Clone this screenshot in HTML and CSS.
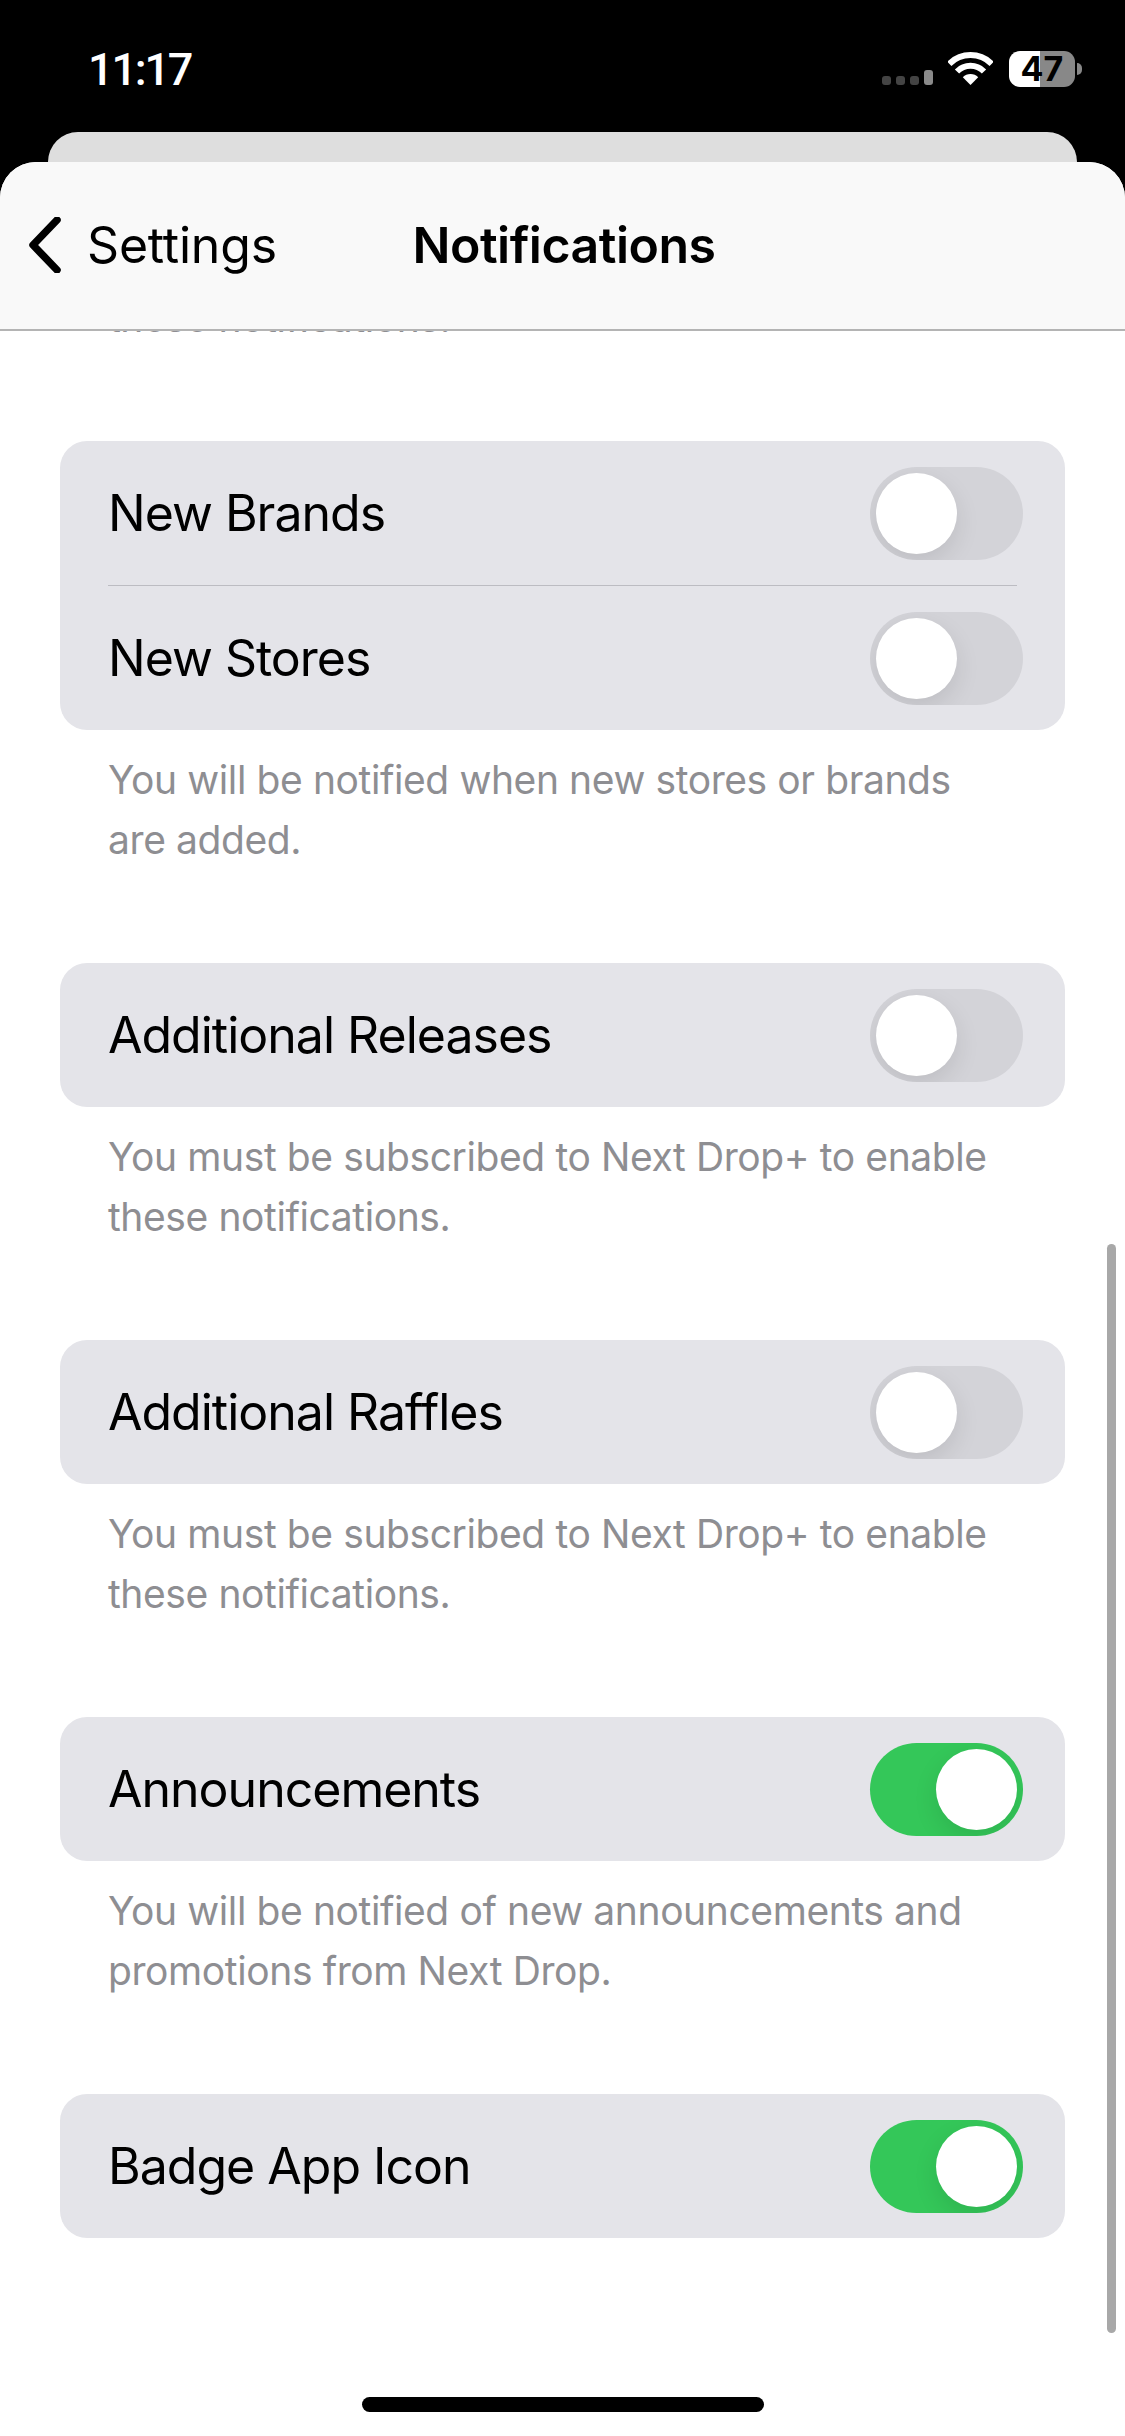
FILE: index.html
```html
<!DOCTYPE html>
<html lang="en">
<head>
<meta charset="utf-8">
<title>Notifications</title>
<link rel="stylesheet" href="styles.css">
</head>
<body>
<div class="phone">
  <header class="status">
    <span class="time">11:17</span>
    <div class="status-icons">
      <div class="cell"><i></i><i></i><i></i><i class="on"></i></div>
      <svg class="wifi" viewBox="0 0 45 33" aria-hidden="true">
        <path d="M1.3 11.8A30 30 0 0 1 43.7 11.8" fill="none" stroke="#fff" stroke-width="6"/>
        <path d="M9 19.5A19 19 0 0 1 36 19.5" fill="none" stroke="#fff" stroke-width="6"/>
        <path d="M22.5 33L14.8 25.2A11 11 0 0 1 30.2 25.2Z" fill="#fff"/>
      </svg>
      <div class="battery"><div class="battery-body">47</div><div class="battery-nub"></div></div>
    </div>
  </header>
  <div class="back-card"></div>
  <main class="sheet">
    <nav class="nav">
      <div class="back">
        <svg class="chevron" viewBox="0 0 34 56" aria-hidden="true"><path d="M29 3L5 28L29 53" fill="none" stroke="#000" stroke-width="7.5" stroke-linecap="round" stroke-linejoin="round"/></svg>
        <span>Settings</span>
      </div>
      <h1 class="title">Notifications</h1>
    </nav>
    <div class="content">
      <p class="note note-top">these notifications.</p>
      <section class="group">
        <div class="row"><span>New Brands</span><div class="toggle"><div class="knob"></div></div></div>
        <div class="divider"></div>
        <div class="row"><span>New Stores</span><div class="toggle"><div class="knob"></div></div></div>
      </section>
      <p class="note">You will be notified when new stores or brands are added.</p>
      <section class="group">
        <div class="row"><span>Additional Releases</span><div class="toggle"><div class="knob"></div></div></div>
      </section>
      <p class="note">You must be subscribed to Next Drop+ to enable these notifications.</p>
      <section class="group">
        <div class="row"><span>Additional Raffles</span><div class="toggle"><div class="knob"></div></div></div>
      </section>
      <p class="note">You must be subscribed to Next Drop+ to enable these notifications.</p>
      <section class="group">
        <div class="row"><span>Announcements</span><div class="toggle on"><div class="knob"></div></div></div>
      </section>
      <p class="note">You will be notified of new announcements and promotions from Next Drop.</p>
      <section class="group">
        <div class="row"><span>Badge App Icon</span><div class="toggle on"><div class="knob"></div></div></div>
      </section>
    </div>
    <div class="scrollbar"></div>
    <div class="home"></div>
  </main>
</div>
</body>
</html>
```
FILE: styles.css
```css
* { box-sizing: border-box; }
html, body { margin: 0; padding: 0; height: 2436px; overflow: hidden; background: #000; }
body { font-family: Inter, "Liberation Sans", sans-serif; color: #000; }
.phone { width: 1125px; height: 2436px; display: flex; flex-direction: column; background: #000; }

.status { height: 132px; flex: none; display: flex; align-items: flex-start; justify-content: space-between; padding: 0 43px 0 88px; color: #fff; }
.time { font-family: Roboto, sans-serif; font-size: 45px; font-weight: 500; line-height: 50px; margin-top: 45px; letter-spacing: -2.2px; }
.status-icons { display: flex; align-items: flex-start; margin-top: 51px; }
.cell { display: flex; align-items: flex-end; gap: 5px; height: 34px; width: 51px; margin-right: 15px; }
.cell i { display: block; width: 9px; height: 9px; border-radius: 3px; background: #444; }
.cell i.on { height: 15px; background: #8a8a8a; }
.wifi { width: 45px; height: 33px; margin-top: 1px; margin-right: 16px; }
.battery { display: flex; align-items: center; }
.battery-body { width: 66px; height: 36px; border-radius: 11px; background: linear-gradient(90deg, #fff 47%, #888 47%); color: #000; font-size: 34px; line-height: 36px; font-weight: 700; text-align: center; }
.battery-nub { width: 5px; height: 12px; margin-left: 2px; border-radius: 0 6px 6px 0; background: #888; }

.back-card { flex: none; height: 60px; margin: 0 48px -30px; background: #dedede; border-radius: 30px 30px 0 0; }

.sheet { flex: 1; position: relative; display: flex; flex-direction: column; background: #fff; border-radius: 36px 36px 0 0; overflow: hidden; }
.nav { position: relative; z-index: 1; flex: none; height: 169px; display: flex; align-items: center; justify-content: center; padding: 0 0 1px 3px; background: #f9f9f9; border-bottom: 2px solid #b4b4b4; }
.back { position: absolute; left: 28px; top: 55px; display: flex; align-items: center; gap: 25px; font-size: 50px; line-height: 56px; letter-spacing: -0.2px; }
.chevron { width: 34px; height: 56px; }
.title { margin: 0; font-size: 50px; line-height: 60px; font-weight: 600; letter-spacing: -0.5px; }

.content { flex: none; margin-top: -43px; padding: 0 60px; }
.group { background: #e4e4e9; border-radius: 27px; }
.row { height: 144px; display: flex; align-items: center; justify-content: space-between; padding: 0 42px 0 48px; font-size: 50px; letter-spacing: -1px; }
.divider { height: 1px; margin: 0 48px; background: #bcbcc2; }
.note { margin: 20px 0 93px; padding: 0 48px; font-size: 39px; line-height: 60px; color: #8e8e92; letter-spacing: -0.4px; }
.note-top { margin-top: 0; }

.toggle { position: relative; width: 153px; height: 93px; border-radius: 47px; background: #d3d3d8; overflow: hidden; }
.toggle.on { background: #34c759; }
.knob { position: absolute; left: 6px; top: 6px; width: 81px; height: 81px; border-radius: 50%; background: #fff; box-shadow: 0 9px 24px rgba(0, 0, 0, 0.1); }
.toggle.on .knob { left: 66px; }

.scrollbar { position: absolute; left: 1107px; top: 1082px; width: 9px; height: 1089px; border-radius: 5px; background: #a8a8a8; }
.home { position: absolute; left: 362px; top: 2235px; width: 402px; height: 15px; border-radius: 8px; background: #000; }
```
